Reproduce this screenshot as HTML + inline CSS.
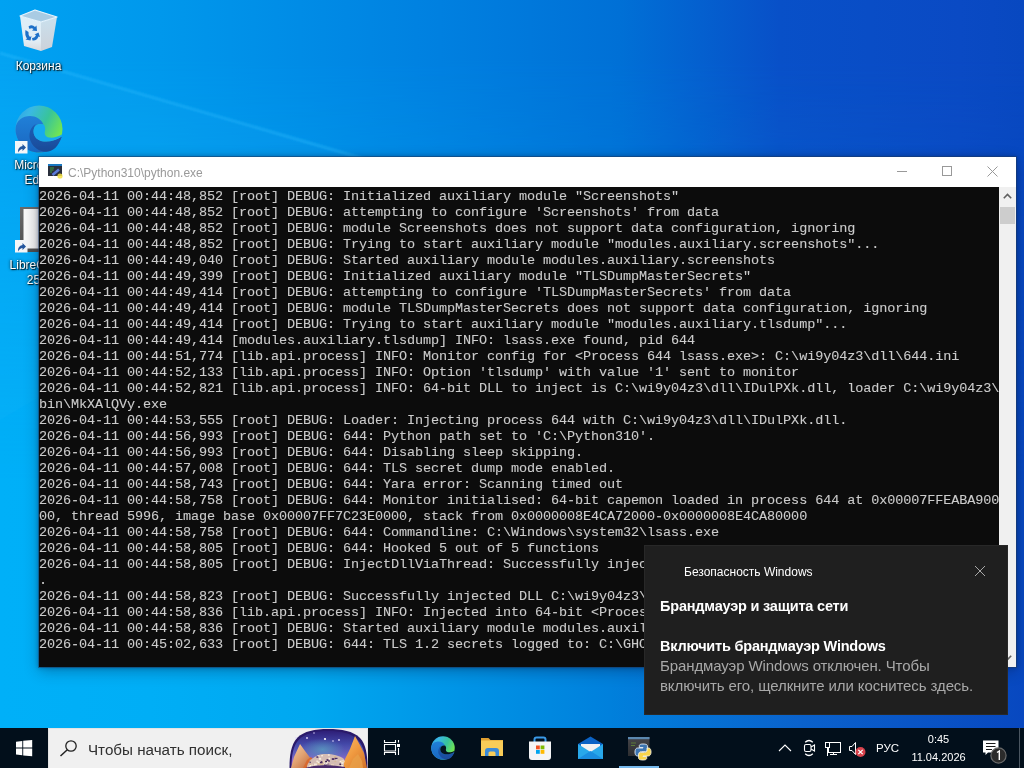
<!DOCTYPE html>
<html><head><meta charset="utf-8">
<style>
*{box-sizing:border-box;margin:0;padding:0}
html,body{width:1024px;height:768px;overflow:hidden}
body{position:relative;font-family:"Liberation Sans",sans-serif;background:#0a70d0}
#bg1{position:absolute;left:0;top:0;width:1024px;height:768px;background:linear-gradient(90deg,#00b0f8 0px,#00aef6 150px,#00a8f0 310px,#0080dc 610px,#0a62cc 800px,#0848c0 1024px)}
#bg2{position:absolute;left:0;top:0;width:1024px;height:768px;background:linear-gradient(90deg,#00a2f2 0px,#0098ec 160px,#0080e0 440px,#0070d6 620px,#0850c8 780px,#0a4ac4 960px,#0848c0 1024px);-webkit-mask-image:linear-gradient(180deg,#000 0px,#000 60px,rgba(0,0,0,0) 480px)}
#beam{position:absolute;left:0;top:0}
.abs{position:absolute}
#win{position:absolute;left:39px;top:157px;width:977px;height:510px;background:#fff;box-shadow:0 0 0 1px rgba(30,60,100,.5),0 0 4px 1px rgba(0,30,70,.3),0 4px 14px rgba(0,0,40,.3)}
#title{will-change:transform;position:absolute;left:29px;top:9px;font-size:12px;color:#999;white-space:nowrap;line-height:14px}
#con{position:absolute;left:0;top:30px;width:960px;height:480px;background:#0c0c0c;overflow:hidden}
#con pre{position:absolute;left:0;top:2px;will-change:transform;-webkit-text-stroke:0.1px #c8c8c8;font-family:"Liberation Mono",monospace;font-size:13.5px;letter-spacing:-0.1px;line-height:16px;color:#cccccc;white-space:pre}
#sb{position:absolute;left:960px;top:30px;width:17px;height:480px;background:#f0f0f0}
#note{will-change:transform;position:absolute;left:644px;top:545px;width:364px;height:170px;background:#1f1f1f;color:#fff;box-shadow:inset 0 0 0 1px rgba(255,255,255,.045)}
#tb{will-change:transform;position:absolute;left:0;top:728px;width:1024px;height:40px;background:#020f1b}
.lbl{will-change:transform;position:absolute;text-align:center;font-size:12px;line-height:15px;color:#fff;text-shadow:0 0 3px rgba(0,0,0,.9),1px 1px 1px rgba(0,0,0,.8)}
</style></head><body>

<div id="bg1"></div><div id="bg2"></div>
<svg id="beam" width="1024" height="768" viewBox="0 0 1024 768"><defs><filter id="bl" x="-5%" y="-50%" width="110%" height="200%"><feGaussianBlur stdDeviation="1"/></filter></defs><path d="M0 53L420 175L0 420Z" fill="rgba(80,200,255,.05)"/><path d="M0 53L420 175" stroke="rgba(50,190,255,.42)" stroke-width="2.5" filter="url(#bl)"/></svg>
<!-- desktop icons -->
<svg class="abs" style="left:14px;top:4px" width="50" height="50" viewBox="0 0 50 50">
  <defs>
    <linearGradient id="rbl" x1="0" y1="0" x2="0" y2="1"><stop offset="0" stop-color="#e8f2f8"/><stop offset=".7" stop-color="#eef2f6"/><stop offset="1" stop-color="#e4dcdc"/></linearGradient>
    <linearGradient id="rbr" x1="0" y1="0" x2="0" y2="1"><stop offset="0" stop-color="#d4e4ee"/><stop offset="1" stop-color="#d8d4d8"/></linearGradient>
  </defs>
  <path d="M6 12L27 18L27 47L10 42Z" fill="url(#rbl)" opacity=".95"/>
  <path d="M27 18L43 13L38 43L27 47Z" fill="url(#rbr)" opacity=".95"/>
  <path d="M6 12L21 6L43 13L27 18Z" fill="#a9cbe3"/>
  <path d="M6 12L21 6L43 13L27 18Z" fill="none" stroke="#e8f4fc" stroke-width="1.3" stroke-linejoin="round"/>
  <g fill="#1d70c8">
    <path d="M14.5 22.5Q18 20 21 23L22.5 21.5L23 27L18 26.5L19.5 25Q17.5 23.5 15.5 25Z"/>
    <path d="M11.5 26Q10.5 31 13 34.5L11.5 35.5L16.5 36.5L17.5 32L16 33Q14 31 14.5 28Z"/>
    <path d="M18.5 36.5Q23 37 24.5 32.5L26 33L24.5 28.5L20.5 30.5L22 31Q21 34 18 34Z"/>
  </g>
</svg>
<div class="lbl" style="left:0;top:59px;width:77px">Корзина</div>
<svg class="abs" style="left:15px;top:105px" width="48" height="48" viewBox="0 0 48 48">
  <defs>
    <linearGradient id="de1" x1="0" y1="0" x2="1" y2="0.5"><stop offset="0" stop-color="#2a9fe6"/><stop offset=".3" stop-color="#3ab8e4"/><stop offset=".65" stop-color="#38c49a"/><stop offset="1" stop-color="#74e650"/></linearGradient>
    <linearGradient id="de2" x1="0" y1="0" x2="0" y2="1"><stop offset="0" stop-color="#2080d8"/><stop offset="1" stop-color="#1a66c0"/></linearGradient>
    <linearGradient id="de3" x1="0" y1="0" x2="0" y2="1"><stop offset="0" stop-color="#1a5fb8"/><stop offset="1" stop-color="#1b4a98"/></linearGradient>
  </defs>
  <circle cx="24" cy="24" r="23.5" fill="url(#de1)"/>
  <path d="M0.5 24C1 15 8 11 15 11C21 11 26 14 28.5 19.5C23.5 17.5 18.5 21 18.5 26.5C18.5 32 23 36 29 36.5C35 37 41 35.5 46.8 31.5C43 42 35 47.5 24 47.5C11 47.5 0.5 37 0.5 24Z" fill="url(#de2)"/>
  <path d="M21 18.8C15 22 13 30 15.5 36C18.5 43 25 46.8 31 46.8C38 46.8 43.5 41.5 46.8 31.5C41 35.5 35 37 29 36.5C23 36 18.5 32 18.5 26.5C18.5 23 19.5 20.5 21 18.8Z" fill="url(#de3)"/>
  <path d="M28.5 19.5C23.5 17.5 18.5 21 18.5 26.5C18.5 32 23 36 29 36.5C35 37 41 35.5 46.8 31.5L47 29.5C43 32 38 33 34 32.5C30.5 32 29 29 30 26C30.5 23.5 30 21 28.5 19.5Z" fill="#16aaf0"/>
</svg>
<svg class="abs" style="left:15px;top:141px" width="13" height="13" viewBox="0 0 13 13"><rect width="12.5" height="12.5" fill="#f4f6f8"/><path d="M3 11.5Q2.5 6 7.5 5V3L11 6.5L7.5 10V8Q5 8 3 11.5Z" fill="#24569e"/></svg>
<div class="lbl" style="left:0;top:158px;width:77px">Microsoft<br>Edge</div>
<svg class="abs" style="left:20px;top:207px" width="40" height="46" viewBox="0 0 40 46">
  <defs><linearGradient id="lo" x1="0" y1="0" x2="1" y2="0"><stop offset="0" stop-color="#fafafa"/><stop offset="1" stop-color="#dcdcdc"/></linearGradient>
  <linearGradient id="lof" x1="0" y1="0" x2="0" y2="1"><stop offset="0" stop-color="#6a6a6a"/><stop offset="1" stop-color="#4e4e4e"/></linearGradient></defs>
  <rect x="0" y="0" width="40" height="45" fill="url(#lof)"/>
  <rect x="3.5" y="2" width="36" height="39.5" fill="url(#lo)"/>
</svg>
<svg class="abs" style="left:15px;top:240px" width="13" height="13" viewBox="0 0 13 13"><rect width="12.5" height="12.5" fill="#f4f6f8"/><path d="M3 11.5Q2.5 6 7.5 5V3L11 6.5L7.5 10V8Q5 8 3 11.5Z" fill="#24569e"/></svg>
<div class="lbl" style="left:0;top:258px;width:77px">LibreOffice<br>25.2</div>

<div id="win">
  <svg class="abs" style="left:8px;top:6px" width="18" height="18" viewBox="0 0 18 18">
    <rect x="1" y="1" width="14" height="12" fill="#2a2f3c"/>
    <rect x="1" y="1" width="14" height="2" fill="#1a78c0"/>
    <path d="M3 5H7M3 7H6.5M3 9H5" stroke="#3aa040" stroke-width="1"/>
    <path d="M5.5 12L12 6.5" stroke="#5a7ad8" stroke-width="2.6"/>
    <circle cx="13" cy="13" r="2.6" fill="#f4e040" opacity=".85"/>
  </svg>
  <div id="title">C:\Python310\python.exe</div>
  <svg class="abs" style="left:858px;top:9px" width="11" height="11" viewBox="0 0 11 11"><path d="M0 5.5H10" stroke="#999" stroke-width="1"/></svg>
  <svg class="abs" style="left:903px;top:9px" width="11" height="11" viewBox="0 0 11 11"><rect x="0.5" y="0.5" width="9" height="9" stroke="#999" stroke-width="1" fill="none"/></svg>
  <svg class="abs" style="left:948px;top:9px" width="11" height="11" viewBox="0 0 11 11"><path d="M0.5 0.5L10.5 10.5M10.5 0.5L0.5 10.5" stroke="#999" stroke-width="1" fill="none"/></svg>
  <div id="con"><pre>2026-04-11 00:44:48,852 [root] DEBUG: Initialized auxiliary module "Screenshots"
2026-04-11 00:44:48,852 [root] DEBUG: attempting to configure 'Screenshots' from data
2026-04-11 00:44:48,852 [root] DEBUG: module Screenshots does not support data configuration, ignoring
2026-04-11 00:44:48,852 [root] DEBUG: Trying to start auxiliary module "modules.auxiliary.screenshots"...
2026-04-11 00:44:49,040 [root] DEBUG: Started auxiliary module modules.auxiliary.screenshots
2026-04-11 00:44:49,399 [root] DEBUG: Initialized auxiliary module "TLSDumpMasterSecrets"
2026-04-11 00:44:49,414 [root] DEBUG: attempting to configure 'TLSDumpMasterSecrets' from data
2026-04-11 00:44:49,414 [root] DEBUG: module TLSDumpMasterSecrets does not support data configuration, ignoring
2026-04-11 00:44:49,414 [root] DEBUG: Trying to start auxiliary module "modules.auxiliary.tlsdump"...
2026-04-11 00:44:49,414 [modules.auxiliary.tlsdump] INFO: lsass.exe found, pid 644
2026-04-11 00:44:51,774 [lib.api.process] INFO: Monitor config for &lt;Process 644 lsass.exe&gt;: C:\wi9y04z3\dll\644.ini
2026-04-11 00:44:52,133 [lib.api.process] INFO: Option 'tlsdump' with value '1' sent to monitor
2026-04-11 00:44:52,821 [lib.api.process] INFO: 64-bit DLL to inject is C:\wi9y04z3\dll\IDulPXk.dll, loader C:\wi9y04z3\
bin\MkXAlQVy.exe
2026-04-11 00:44:53,555 [root] DEBUG: Loader: Injecting process 644 with C:\wi9y04z3\dll\IDulPXk.dll.
2026-04-11 00:44:56,993 [root] DEBUG: 644: Python path set to 'C:\Python310'.
2026-04-11 00:44:56,993 [root] DEBUG: 644: Disabling sleep skipping.
2026-04-11 00:44:57,008 [root] DEBUG: 644: TLS secret dump mode enabled.
2026-04-11 00:44:58,743 [root] DEBUG: 644: Yara error: Scanning timed out
2026-04-11 00:44:58,758 [root] DEBUG: 644: Monitor initialised: 64-bit capemon loaded in process 644 at 0x00007FFEABA900
00, thread 5996, image base 0x00007FF7C23E0000, stack from 0x0000008E4CA72000-0x0000008E4CA80000
2026-04-11 00:44:58,758 [root] DEBUG: 644: Commandline: C:\Windows\system32\lsass.exe
2026-04-11 00:44:58,805 [root] DEBUG: 644: Hooked 5 out of 5 functions
2026-04-11 00:44:58,805 [root] DEBUG: InjectDllViaThread: Successfully injected 64-bit DLL to process 644 via thread
.
2026-04-11 00:44:58,823 [root] DEBUG: Successfully injected DLL C:\wi9y04z3\dll\IDulPXk.dll.
2026-04-11 00:44:58,836 [lib.api.process] INFO: Injected into 64-bit &lt;Process 644 lsass.exe&gt;
2026-04-11 00:44:58,836 [root] DEBUG: Started auxiliary module modules.auxiliary.tlsdump
2026-04-11 00:45:02,633 [root] DEBUG: 644: TLS 1.2 secrets logged to: C:\GHOSTS\tlsdump.log</pre></div>
  <div id="sb">
    <svg class="abs" style="left:4px;top:6px" width="9" height="6" viewBox="0 0 9 6"><path d="M0.8 5.2L4.5 1.5L8.2 5.2" stroke="#606060" stroke-width="1.6" fill="none"/></svg>
    <div class="abs" style="left:1px;top:20px;width:15px;height:17px;background:#cdcdcd"></div>
    <svg class="abs" style="left:4px;top:468px" width="9" height="6" viewBox="0 0 9 6"><path d="M0.8 0.8L4.5 4.5L8.2 0.8" stroke="#606060" stroke-width="1.6" fill="none"/></svg>
  </div>
</div>

<div id="note">
  <div class="abs" style="left:40px;top:20px;font-size:12px;line-height:14px;color:#fff;white-space:nowrap">Безопасность Windows</div>
  <svg class="abs" style="left:330px;top:20px" width="12" height="12" viewBox="0 0 12 12"><path d="M1 1L11 11M11 1L1 11" stroke="#a8a8a8" stroke-width="1" fill="none"/></svg>
  <div class="abs" style="left:16px;top:51px;font-size:14.5px;letter-spacing:-0.2px;font-weight:bold;line-height:20px;color:#fff;white-space:nowrap">Брандмауэр и защита сети</div>
  <div class="abs" style="left:16px;top:91px;font-size:14.5px;letter-spacing:-0.2px;font-weight:bold;line-height:20px;color:#fff;white-space:nowrap">Включить брандмауэр Windows</div>
  <div class="abs" style="left:16px;top:111px;font-size:15px;letter-spacing:-0.1px;line-height:20px;color:#a8a8a8;white-space:nowrap">Брандмауэр Windows отключен. Чтобы<br>включить его, щелкните или коснитесь здесь.</div>
</div>
<div id="tb">
  <!-- start -->
  <svg class="abs" style="left:16px;top:12px" width="17" height="17" viewBox="0 0 17 17"><path d="M0 1.7L6.3 0.9V7.5H0Z M7.2 0.8L16.2 0V7.5H7.2Z M0 8.4H6.3V15.2L0 14.4Z M7.2 8.4H16.2V16.3L7.2 15.4Z" fill="#fff"/></svg>
  <!-- search -->
  <div class="abs" style="left:48px;top:0;width:320px;height:40px;background:#f0f0f0;border:1px solid #e4e4e4;border-bottom:none"></div>
  <svg class="abs" style="left:59px;top:12px" width="19" height="17" viewBox="0 0 19 17"><circle cx="12" cy="6" r="5.2" stroke="#222" stroke-width="1.3" fill="none"/><path d="M8.3 9.7L1.5 16" stroke="#222" stroke-width="1.5"/></svg>
  <div class="abs" style="left:88px;top:13px;font-size:15.2px;line-height:18px;color:#303030;white-space:nowrap">Чтобы начать поиск,</div>
  <div id="hl" class="abs" style="left:289px;top:1px;width:79px;height:39px;overflow:hidden">
    <svg width="79" height="39" viewBox="0 0 79 39">
      <defs>
        <linearGradient id="sky" x1="0" y1="0" x2="0" y2="1"><stop offset="0" stop-color="#2e1f78"/><stop offset=".35" stop-color="#4348a8"/><stop offset=".65" stop-color="#6a64c0"/><stop offset=".85" stop-color="#a06ad0"/><stop offset="1" stop-color="#8a5ab0"/></linearGradient>
        <radialGradient id="glow" cx=".42" cy=".5" r=".3"><stop offset="0" stop-color="#58a0c0" stop-opacity=".75"/><stop offset="1" stop-color="#58a0c0" stop-opacity="0"/></radialGradient>
        <linearGradient id="mt" x1="0" y1="0" x2="1" y2="1"><stop offset="0" stop-color="#f8d0a0"/><stop offset=".5" stop-color="#e0a070"/><stop offset="1" stop-color="#c06030"/></linearGradient>
        <linearGradient id="mt2" x1="0" y1="0" x2="1" y2="1"><stop offset="0" stop-color="#f8c070"/><stop offset=".5" stop-color="#f09a40"/><stop offset="1" stop-color="#d07028"/></linearGradient>
      </defs>
      <path d="M0.5 39C0.5 26 2 16 8 9C15 2 26 0 39 0C53 0 64 2 71 9C77 15 78.5 26 78.5 39Z" fill="#2a1a6a"/>
      <path d="M2.5 39C2.5 27 4 17 9.5 11C16 4 27 2 39 2C52 2 62 4 69 11C75 17 76.5 27 76.5 39Z" fill="url(#sky)"/>
      <path d="M2.5 39C2.5 27 4 17 9.5 11C16 4 27 2 39 2C52 2 62 4 69 11C75 17 76.5 27 76.5 39Z" fill="url(#glow)"/>
      <circle cx="7" cy="9" r=".8" fill="#d8d0ff"/><circle cx="18" cy="9" r=".9" fill="#e8e0ff"/><circle cx="36" cy="10" r="1.1" fill="#fff"/><circle cx="44" cy="12" r=".8" fill="#e0d8ff"/><circle cx="50" cy="11" r=".9" fill="#e8e0ff"/><circle cx="25" cy="4" r=".8" fill="#c8c0f0"/>
      <path d="M2 39L5 28L11 15L16 22L22 30L24 39Z" fill="url(#mt)"/>
      <path d="M14 39L18 31L22 28L27 34L26 39Z" fill="#d86a30"/>
      <path d="M52 39L56 30L61 20L66 7L71 16L75 24L78 39Z" fill="url(#mt2)"/>
      <path d="M60 39L64 30L69 25L73 32L74 39Z" fill="#e8a048" opacity=".8"/>
      <path d="M18 37C20 31 26 26 34 25C42 24.5 50 26 55 30L55 39H18Z" fill="#d4bcb4"/><rect x="27.3" y="31.5" width="1.9" height="1.6" fill="#f4e8d8"/><rect x="40.2" y="35.9" width="2.0" height="1.6" fill="#3a2050"/><rect x="35.5" y="35.0" width="2.1" height="1.6" fill="#3a2050"/><rect x="24.3" y="36.1" width="1.9" height="1.0" fill="#e8d0b0"/><rect x="45.5" y="32.1" width="1.7" height="1.0" fill="#d8b890"/><rect x="39.8" y="36.0" width="1.9" height="1.8" fill="#fff4e0"/><rect x="34.6" y="36.2" width="2.8" height="1.1" fill="#4a2a60"/><rect x="28.0" y="33.1" width="2.6" height="1.9" fill="#d8b890"/><rect x="39.1" y="31.4" width="1.9" height="1.2" fill="#4a2a60"/><rect x="49.0" y="36.9" width="2.4" height="1.2" fill="#fff4e0"/><rect x="50.7" y="31.8" width="2.5" height="1.2" fill="#fff4e0"/><rect x="28.3" y="26.5" width="2.1" height="1.6" fill="#f8f0e0"/><rect x="47.0" y="29.9" width="1.5" height="1.3" fill="#f4e8d8"/><rect x="20.5" y="32.4" width="1.3" height="1.7" fill="#5a3a70"/><rect x="36.7" y="37.0" width="1.8" height="1.1" fill="#f4e8d8"/><rect x="52.2" y="36.7" width="1.7" height="1.3" fill="#f8f0e0"/><rect x="30.0" y="36.5" width="2.8" height="1.4" fill="#fff4e0"/><rect x="32.5" y="35.4" width="2.4" height="1.1" fill="#fff4e0"/><rect x="28.5" y="32.6" width="2.5" height="1.9" fill="#f8f0e0"/><rect x="37.2" y="31.6" width="1.2" height="1.4" fill="#f4e8d8"/><rect x="32.2" y="32.1" width="1.4" height="1.6" fill="#5a3a70"/><rect x="42.8" y="29.2" width="2.5" height="1.7" fill="#4a2a60"/><rect x="31.9" y="32.5" width="1.7" height="1.6" fill="#4a2a60"/><rect x="29.9" y="29.4" width="2.3" height="1.3" fill="#f4e8d8"/><rect x="53.0" y="33.2" width="1.4" height="1.5" fill="#f8f0e0"/><rect x="27.4" y="27.2" width="2.0" height="1.7" fill="#5a3a70"/><rect x="52.2" y="33.1" width="1.6" height="1.8" fill="#f4e8d8"/><rect x="30.8" y="32.8" width="2.8" height="1.5" fill="#4a2a60"/><rect x="20.2" y="36.5" width="1.8" height="1.8" fill="#f8f0e0"/><rect x="30.9" y="34.9" width="1.4" height="1.6" fill="#d8b890"/><rect x="29.2" y="34.5" width="1.7" height="1.3" fill="#d8b890"/><rect x="38.9" y="25.4" width="1.9" height="1.2" fill="#fff4e0"/><rect x="52.3" y="36.1" width="1.6" height="1.7" fill="#fff4e0"/><rect x="52.7" y="31.5" width="2.8" height="1.9" fill="#f8f0e0"/><rect x="20.2" y="34.6" width="2.1" height="1.2" fill="#d8b890"/><rect x="45.1" y="27.1" width="1.7" height="1.7" fill="#d8b890"/><rect x="20.9" y="36.0" width="1.4" height="1.1" fill="#fff4e0"/><rect x="35.7" y="34.4" width="1.8" height="1.2" fill="#f4e8d8"/><rect x="25.0" y="34.5" width="2.9" height="1.8" fill="#f4e8d8"/><rect x="36.1" y="31.9" width="1.9" height="1.8" fill="#3a2050"/><rect x="37.5" y="30.1" width="2.1" height="1.8" fill="#4a2a60"/><rect x="20.7" y="30.8" width="1.3" height="1.7" fill="#d8b890"/><rect x="30.1" y="28.8" width="1.8" height="1.6" fill="#f8f0e0"/><rect x="28.3" y="36.9" width="2.0" height="1.1" fill="#3a2050"/><rect x="32.3" y="26.0" width="1.5" height="1.4" fill="#fff4e0"/><rect x="32.3" y="34.6" width="2.3" height="1.4" fill="#d8b890"/><rect x="45.6" y="28.8" width="2.9" height="1.4" fill="#4a2a60"/><rect x="37.8" y="33.3" width="1.3" height="1.4" fill="#f4e8d8"/><rect x="50.4" y="34.5" width="1.7" height="1.5" fill="#3a2050"/><rect x="42.2" y="35.6" width="2.6" height="1.7" fill="#fff4e0"/><rect x="37.6" y="34.7" width="2.5" height="1.5" fill="#5a3a70"/><rect x="22.5" y="35.6" width="1.5" height="1.0" fill="#f4e8d8"/><rect x="35.9" y="33.4" width="1.7" height="1.3" fill="#3a2050"/><rect x="36.9" y="33.6" width="1.4" height="1.7" fill="#f4e8d8"/><rect x="38.3" y="35.4" width="1.5" height="1.1" fill="#e8d0b0"/><rect x="34.9" y="33.4" width="2.9" height="1.3" fill="#f8f0e0"/><rect x="38.5" y="36.6" width="1.9" height="1.2" fill="#e8d0b0"/><rect x="33.5" y="31.8" width="2.2" height="1.9" fill="#e8d0b0"/><rect x="41.5" y="35.8" width="1.5" height="1.1" fill="#fff4e0"/><rect x="52.3" y="32.0" width="2.7" height="1.1" fill="#e8d0b0"/><rect x="39.5" y="28.8" width="1.6" height="1.7" fill="#f8f0e0"/><rect x="42.5" y="35.3" width="2.3" height="1.6" fill="#e8d0b0"/><path d="M16 39C24 36 40 35 56 38V39Z" fill="#4a2a6a"/>
    </svg>
  </div>
  <!-- task view -->
  <svg class="abs" style="left:383px;top:11px" width="18" height="17" viewBox="0 0 18 17"><path d="M1.5 1V3.5H12.5V1 M1.5 16V13.5H12.5V16 M1.5 5.5H12.5V12H1.5Z M15.5 1V3.5 M15.5 9V16" stroke="#fff" stroke-width="1.1" fill="none"/><rect x="14" y="5" width="3" height="3" fill="#fff"/></svg>
  <!-- edge -->
  <svg class="abs" style="left:431px;top:8px" width="24" height="24" viewBox="0 0 48 48">
    <circle cx="24" cy="24" r="23.5" fill="url(#de1)"/>
    <path d="M0.5 24C1 15 8 11 15 11C21 11 26 14 28.5 19.5C23.5 17.5 18.5 21 18.5 26.5C18.5 32 23 36 29 36.5C35 37 41 35.5 46.8 31.5C43 42 35 47.5 24 47.5C11 47.5 0.5 37 0.5 24Z" fill="url(#de2)"/>
    <path d="M21 18.8C15 22 13 30 15.5 36C18.5 43 25 46.8 31 46.8C38 46.8 43.5 41.5 46.8 31.5C41 35.5 35 37 29 36.5C23 36 18.5 32 18.5 26.5C18.5 23 19.5 20.5 21 18.8Z" fill="url(#de3)"/>
    <path d="M28.5 19.5C23.5 17.5 18.5 21 18.5 26.5C18.5 32 23 36 29 36.5C35 37 41 35.5 46.8 31.5L47 29.5C43 32 38 33 34 32.5C30.5 32 29 29 30 26C30.5 23.5 30 21 28.5 19.5Z" fill="#041420"/>
  </svg>
  <!-- explorer -->
  <svg class="abs" style="left:480px;top:9px" width="24" height="21" viewBox="0 0 24 21">
    <path d="M1 1H8.5L10.5 3H23V19H1Z" fill="#e0a030"/>
    <path d="M1 3.5H23V19H1Z" fill="#f8cc58"/>
    <path d="M5 19V14Q5 11 8 11H16Q19 11 19 14V19H15.5V16Q15.5 14.5 14 14.5H10Q8.5 14.5 8.5 16V19Z" fill="#3a8ad8"/>
    <rect x="9.5" y="15.5" width="5" height="3.5" fill="#f8cc58"/>
  </svg>
  <!-- store -->
  <svg class="abs" style="left:528px;top:8px" width="24" height="25" viewBox="0 0 24 25">
    <path d="M6.5 7V3.5Q6.5 1.5 8.5 1.5H15.5Q17.5 1.5 17.5 3.5V7" stroke="#3a9ae8" stroke-width="2" fill="none"/>
    <path d="M1 5.5H23V21Q23 24 20 24H4Q1 24 1 21Z" fill="#f4f4f6"/>
    <rect x="8" y="9.5" width="3.8" height="3.8" fill="#f25022"/><rect x="12.6" y="9.5" width="3.8" height="3.8" fill="#7fba00"/>
    <rect x="8" y="14" width="3.8" height="3.8" fill="#00a4ef"/><rect x="12.6" y="14" width="3.8" height="3.8" fill="#ffb900"/>
  </svg>
  <!-- mail -->
  <svg class="abs" style="left:578px;top:8px" width="25" height="24" viewBox="0 0 25 24">
    <path d="M0 8L12.5 0.5L25 8V23H0Z" fill="#0b63c5"/>
    <path d="M3 8H22V15L12.5 20L3 15Z" fill="#f2f2f2"/>
    <path d="M0 8L12.5 16L25 8V23H0Z" fill="#28a8ea"/>
    <path d="M0 23L12.5 15L25 23Z" fill="#1a8ee0"/>
  </svg>
  <!-- python console -->
  <svg class="abs" style="left:627px;top:8px" width="26" height="26" viewBox="0 0 26 26">
    <defs><linearGradient id="pcb" x1="0" y1="0" x2="0" y2="1"><stop offset="0" stop-color="#45454a"/><stop offset="1" stop-color="#2e2e30"/></linearGradient></defs>
    <rect x="1" y="1" width="21.5" height="19" fill="url(#pcb)"/>
    <rect x="1" y="1" width="21.5" height="2.2" fill="#5b88b0"/>
    <path d="M4 7H9M4 9.5H8" stroke="#5c7a3a" stroke-width="1"/>
    <g transform="translate(8,8)">
      <path d="M7.9 0C4 0 4.3 1.7 4.3 1.7V3.5H8V4H2.8C2.8 4 0 3.7 0 8C0 12.2 2.4 12 2.4 12H3.9V10C3.9 10 3.8 7.6 6.3 7.6H10.1C10.1 7.6 12.4 7.6 12.4 5.4V1.8C12.4 1.8 12.8 0 7.9 0Z" fill="#3d74b0" stroke="#e8eef4" stroke-width=".9"/>
      <path d="M8.1 16C12 16 11.7 14.3 11.7 14.3V12.5H8V12H13.2C13.2 12 16 12.3 16 8C16 3.8 13.6 4 13.6 4H12.1V6C12.1 6 12.2 8.4 9.7 8.4H5.9C5.9 8.4 3.6 8.4 3.6 10.6V14.2C3.6 14.2 3.2 16 8.1 16Z" fill="#f8d44a" stroke="#f4f0e0" stroke-width=".9"/>
    </g>
  </svg>
  <div class="abs" style="left:619px;top:38px;width:40px;height:2px;background:#76b9ed"></div>
  <!-- tray -->
  <svg class="abs" style="left:778px;top:16px" width="14" height="8" viewBox="0 0 14 8"><path d="M1 7L7 1L13 7" stroke="#fff" stroke-width="1.1" fill="none"/></svg>
  <svg class="abs" style="left:803px;top:11px" width="13" height="18" viewBox="0 0 13 18"><path d="M2.2 3.2Q6 -0.2 9.8 3.2 M2.2 14.8Q6 18.2 9.8 14.8" stroke="#fff" stroke-width="1.3" fill="none"/><rect x="1.5" y="5.5" width="6.5" height="7" rx="1.5" stroke="#fff" stroke-width="1.1" fill="none"/><path d="M8 8L11.5 6V12L8 10" stroke="#fff" stroke-width="1.1" fill="none"/></svg>
  <svg class="abs" style="left:824px;top:13px" width="18" height="16" viewBox="0 0 18 16"><rect x="4.5" y="1.5" width="12" height="10" stroke="#fff" stroke-width="1" fill="none"/><path d="M6 13.5H13 M9.5 11.5V13.5 M3.5 6V15" stroke="#fff" stroke-width="1" fill="none"/><rect x="1.5" y="1.5" width="4" height="5" stroke="#fff" stroke-width="1" fill="#020f1b"/></svg>
  <svg class="abs" style="left:848px;top:13px" width="20" height="17" viewBox="0 0 20 17"><path d="M1.5 5.5H4L7.5 1.5V13.5L4 9.5H1.5Z" stroke="#fff" stroke-width="1" fill="none"/><circle cx="12.5" cy="11" r="5" fill="#d8424c"/><path d="M10.3 8.8L14.7 13.2M14.7 8.8L10.3 13.2" stroke="#fff" stroke-width="1.2"/></svg>
  <div class="abs" style="left:876px;top:13px;font-size:11.5px;line-height:14px;color:#fff">РУС</div>
  <div class="abs" style="left:900px;top:4px;width:77px;text-align:center;font-size:11px;line-height:14px;color:#fff">0:45</div><div class="abs" style="left:900px;top:22px;width:77px;text-align:center;font-size:11px;line-height:14px;color:#fff">11.04.2026</div>
  <svg class="abs" style="left:982px;top:12px" width="27" height="24" viewBox="0 0 27 24"><path d="M1 0.5H16.5V12.5H6L3.5 15V12.5H1Z" fill="#fff"/><path d="M4 3.5H13.5M4 6.5H13.5M4 9.5H10" stroke="#1a1a1a" stroke-width="1"/><circle cx="16.5" cy="15.5" r="7.6" fill="#2b2b2b" stroke="#6a6a6a" stroke-width="1.2"/><path d="M15 12.5L17.3 11V20" stroke="#fff" stroke-width="1.4" fill="none"/></svg>
  <div class="abs" style="left:1019px;top:0;width:1px;height:40px;background:#4a5560"></div>
</div>
</body></html>
